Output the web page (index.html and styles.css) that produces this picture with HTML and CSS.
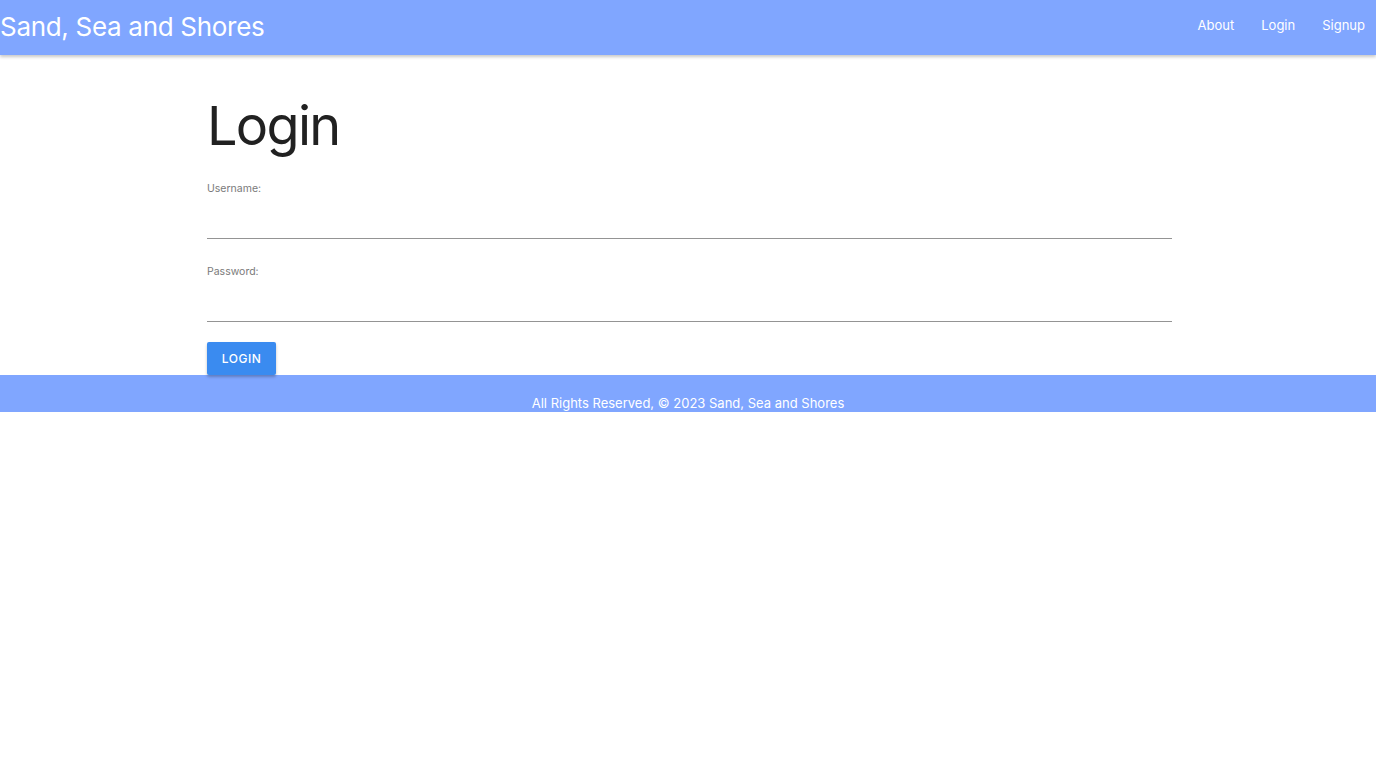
FILE: index.html
```html
<!DOCTYPE html>
<html lang="en">
<head>
<meta charset="utf-8">
<title>Login - Sand, Sea and Shores</title>
<link rel="stylesheet" href="styles.css">
</head>
<body>
<header class="topbar">
  <div class="brand">Sand, Sea and Shores</div>
  <nav class="nav">
    <a href="#">About</a>
    <a href="#">Login</a>
    <a href="#">Signup</a>
  </nav>
</header>
<main class="content">
  <h1 class="title">Login</h1>
  <form class="form">
    <label class="field">
      <span class="label">Username:</span>
      <input class="input" type="text">
    </label>
    <label class="field">
      <span class="label">Password:</span>
      <input class="input" type="password">
    </label>
    <button class="btn" type="button">LOGIN</button>
  </form>
</main>
<footer class="footer">All Rights Reserved, © 2023 Sand, Sea and Shores</footer>
</body>
</html>
```

FILE: styles.css
```css
* { box-sizing: border-box; }
html, body { margin: 0; padding: 0; background: #fff; }
body { font-family: Inter, "Noto Sans", Roboto, sans-serif; color: #212121; }

.topbar {
  height: 55px;
  background: #80a6ff;
  display: flex;
  align-items: center;
  justify-content: space-between;
  box-shadow: 0 2px 3px rgba(0,0,0,0.22);
  position: relative;
  z-index: 1;
}
.brand {
  color: #fff;
  font-size: 26px;
  line-height: 1;
  letter-spacing: -0.3px;
  padding-bottom: 2px;
}
.nav { display: flex; gap: 27px; padding-right: 11px; padding-bottom: 5px; }
.nav a {
  color: #fff;
  text-decoration: none;
  font-size: 13px;
}

.content {
  width: 965px;
  margin-left: calc(50% - 481px);
  padding-top: 36px;
}
.title {
  font-weight: 400;
  font-size: 54px;
  line-height: 70px;
  margin: 0 0 21px 0;
  letter-spacing: -1.7px;
}
.form { display: flex; flex-direction: column; align-items: flex-start; }
.field { display: flex; flex-direction: column; width: 100%; }
.field:first-child { margin-bottom: 26px; }
.field + .field { margin-bottom: 20px; }
.label { font-size: 10.5px; color: #7a7a7a; line-height: 14px; }
.input {
  border: 0;
  border-bottom: 1px solid #949494;
  height: 43px;
  width: 100%;
  font: inherit;
  outline: none;
  background: transparent;
}
.btn {
  background: #3a8bf0;
  color: #fff;
  border: 0;
  border-radius: 2px;
  height: 33px;
  width: 69px;
  font-family: inherit;
  font-size: 12px;
  font-weight: 500;
  letter-spacing: 0.5px;
  box-shadow: 0 2px 3px rgba(0,0,0,0.25);
}
.footer {
  height: 37px;
  background: #80a6ff;
  color: #fff;
  font-size: 13px;
  text-align: center;
  padding-top: 20px;
  line-height: 17px;
}
```
